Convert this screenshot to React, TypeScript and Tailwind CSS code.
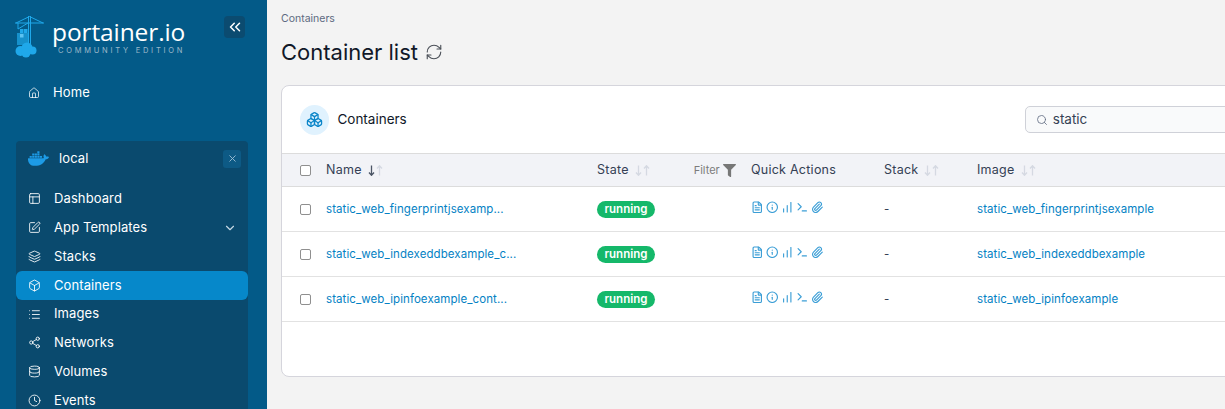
import {
  Home, PanelsTopLeft, SquarePen, Layers, Box, List, Share2, Database, Clock,
  ChevronsLeft, ChevronDown, X, RefreshCw, Search, FileText,
  Info, ChartNoAxesColumnIncreasing, Terminal, Paperclip, Boxes,
} from 'lucide-react';
import { FaDocker, FaFilter } from 'react-icons/fa';

const navItems = [
  { label: 'Dashboard', icon: PanelsTopLeft },
  { label: 'App Templates', icon: SquarePen, chevron: true },
  { label: 'Stacks', icon: Layers },
  { label: 'Containers', icon: Box, active: true },
  { label: 'Images', icon: List },
  { label: 'Networks', icon: Share2 },
  { label: 'Volumes', icon: Database },
  { label: 'Events', icon: Clock },
];

const rows = [
  { name: 'static_web_fingerprintjsexamp...', image: 'static_web_fingerprintjsexample' },
  { name: 'static_web_indexeddbexample_c...', image: 'static_web_indexeddbexample' },
  { name: 'static_web_ipinfoexample_cont...', image: 'static_web_ipinfoexample' },
];

function Logo() {
  return (
    <svg width="30" height="42" viewBox="0 0 30 42" className="shrink-0">
      <g stroke="#1fa8ea" strokeWidth="1" fill="none">
        <path d="M0 7h29M13.5 0v28M15.5 0v28M14.5 0.5 1 7M14.5 0.5 28 7M3 7v6M13 7 3 13" />
      </g>
      <g fill="#1fa8ea">
        <rect x="2" y="17" width="11" height="12" opacity="0.7" />
        <rect x="5" y="13" width="3.5" height="4" />
        <rect x="9" y="13" width="3.5" height="4" />
        <rect x="5" y="18" width="3.5" height="3.5" fill="#5cc3f2" />
        <circle cx="5.5" cy="35" r="5" />
        <circle cx="12" cy="32" r="5.5" />
        <circle cx="17.5" cy="34.5" r="4" />
        <circle cx="11" cy="37" r="4.5" />
      </g>
    </svg>
  );
}

function SortArrows({ dark }: { dark?: boolean }) {
  return (
    <svg width="15" height="11" viewBox="0 0 15 11" fill="none" strokeWidth="1.3" className="shrink-0">
      <path d="M3.5 0.5v9.5M1 7.5l2.5 2.8L6 7.5" stroke={dark ? '#4b5565' : '#d5d9e2'} />
      <path d="M11.5 10.5V1M9 3.5l2.5-2.8L14 3.5" stroke="#d5d9e2" />
    </svg>
  );
}

function Checkbox() {
  return <span className="block w-[11px] h-[11px] rounded-[2px] border border-[#8f8f8f] bg-white" />;
}

export default function App() {
  return (
    <div className="flex h-[409px] w-[1225px] overflow-hidden bg-[#f3f3f3] font-['Inter',sans-serif]">
      {/* Sidebar */}
      <aside className="w-[267px] shrink-0 bg-[#035a88] text-white flex flex-col">
        <div className="flex shrink-0 pl-[15px] pr-[22px] pt-[16px] h-[80px]">
          <Logo />
          <div className="ml-[7px] mt-[2px] flex flex-col">
            <span className="text-[24.5px] leading-[28px] font-['Open_Sans',sans-serif] font-medium tracking-[-0.1px] text-white">portainer.io</span>
            <span className="text-[7.5px] leading-[8px] mt-[1px] tracking-[2.75px] text-[#9ab7c9] ml-[6px] whitespace-nowrap">COMMUNITY EDITION</span>
          </div>
          <button className="ml-auto w-[21px] h-[22px] rounded-[4px] bg-[#0b4b70] flex items-center justify-center">
            <ChevronsLeft size={18} strokeWidth={2} />
          </button>
        </div>
        <div className="flex shrink-0 items-center h-[26px] pl-[28px] text-[13px] tracking-[0.1px]">
          <Home size={12} strokeWidth={1.5} className="mr-[13px]" />
          Home
        </div>
        <div className="mt-[35px] ml-[16px] w-[232px] flex-1 bg-[#0a4a6e] rounded-t-[4px] overflow-hidden">
          <div className="flex items-center h-[35px] pl-[12px] pr-[7px] text-[13px] tracking-[0.1px]">
            <FaDocker size={21} className="text-[#1d9be6] mr-[10px]" />
            local
            <span className="ml-auto w-[18px] h-[18px] rounded-[3px] bg-[#0d5a85] flex items-center justify-center">
              <X size={11} className="text-[#9cc0d6]" />
            </span>
          </div>
          <div className="mt-[8.5px] flex flex-col">
            {navItems.map(item => {
              const Icon = item.icon;
              return (
                <div
                  key={item.label}
                  className={`flex shrink-0 items-center h-[28.8px] pl-[12px] pr-[11px] text-[13px] tracking-[0.1px] rounded-[6px] ${item.active ? 'bg-[#0688ca]' : ''}`}
                >
                  <Icon size={13} strokeWidth={1.6} className="mr-[13px] shrink-0" />
                  {item.label}
                  {item.chevron && <ChevronDown size={14} className="ml-auto text-[#c5d8e4]" />}
                </div>
              );
            })}
          </div>
        </div>
      </aside>

      {/* Main */}
      <main className="flex-1 min-w-0 pl-[14px]">
        <div className="pt-[12px] h-[30px] text-[10.5px] leading-[13px] text-[#5d6a80]">Containers</div>
        <div className="flex items-center h-[28px] mt-[8px] text-[22px] text-[#101828] leading-[28px]">
          Container list
          <RefreshCw size={18} strokeWidth={1.5} className="ml-[7px] text-[#4b5058]" />
        </div>
        <section className="mt-[19px] w-[1000px] h-[292px] bg-white border border-[#d5d5dc] rounded-[8px]">
          <div className="flex items-center h-[67px] pl-[18px]">
            <span className="w-[30px] h-[30px] rounded-full bg-[#e0f2fe] flex items-center justify-center">
              <Boxes size={17} strokeWidth={1.8} className="text-[#0b86c9]" />
            </span>
            <span className="ml-[8px] text-[13.5px] text-[#101828]">Containers</span>
            <div className="ml-[618px] flex items-center w-[260px] h-[27px] rounded-[5px] border border-[#cfd1d8] bg-[#f9fafb] pl-[10px] text-[13.5px] text-[#344054]">
              <Search size={12} strokeWidth={1.7} className="mr-[5px] text-[#667085]" />
              static
            </div>
          </div>
          <div className="grid grid-cols-[26px_271px_154px_133px_93px_1fr] items-center h-[34px] pl-[18px] bg-[#f2f3f7] border-y border-[#dcdcdc] text-[12.5px] tracking-[0.25px] text-[#344054]">
            <Checkbox />
            <span className="flex items-center gap-[6px]">Name <SortArrows dark /></span>
            <span className="flex items-center gap-[6px]">
              State <SortArrows />
              <span className="ml-[38px] flex items-center gap-[3px] text-[11px] tracking-normal text-[#7c7c7c]">
                Filter <FaFilter size={13} className="text-[#777777]" />
              </span>
            </span>
            <span>Quick Actions</span>
            <span className="flex items-center gap-[6px]">Stack <SortArrows /></span>
            <span className="flex items-center gap-[6px]">Image <SortArrows /></span>
          </div>
          {rows.map(row => (
            <div key={row.image} className="grid grid-cols-[26px_271px_154px_133px_93px_1fr] items-center h-[45px] pl-[18px] pt-[1px] border-b border-[#e2e2e2] text-[11.5px] tracking-[0.08px]">
              <Checkbox />
              <span className="text-[#0482c4]">{row.name}</span>
              <span>
                <span className="inline-flex items-center h-[17px] px-[7.5px] rounded-full bg-[#15b86a] text-white text-[11.5px] font-semibold tracking-normal">running</span>
              </span>
              <span className="flex items-center gap-[2.5px] -mt-[5px] text-[#3b9ed6]">
                <FileText size={12.5} strokeWidth={2.2} />
                <Info size={12.5} strokeWidth={2.2} />
                <ChartNoAxesColumnIncreasing size={12.5} strokeWidth={2.2} />
                <Terminal size={12.5} strokeWidth={2.2} />
                <Paperclip size={12.5} strokeWidth={2.2} />
              </span>
              <span className="text-[#344054]">-</span>
              <span className="text-[#0482c4]">{row.image}</span>
            </div>
          ))}
        </section>
      </main>
    </div>
  );
}
